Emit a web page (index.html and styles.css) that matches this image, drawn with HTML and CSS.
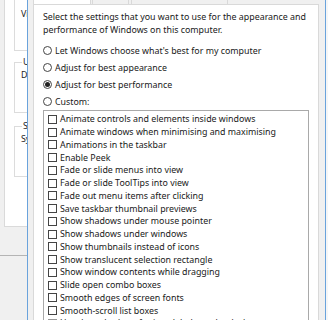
FILE: index.html
```html
<!DOCTYPE html>
<html lang="en">
<head>
    <meta charset="UTF-8">
    <title>Performance Options</title>
    <link rel="stylesheet" href="styles.css">
</head>
<body>
<div class="screen">
    <!-- System Properties window behind, only its right edge shows -->
    <div class="behind-left">
        <div class="sys-panel">
            <div class="grp grp-first">
                <div class="grp-text">Visual</div>
            </div>
            <fieldset class="grp">
                <legend>User</legend>
                <div class="grp-text">Desktop</div>
            </fieldset>
            <fieldset class="grp">
                <legend>Startup</legend>
                <div class="grp-text">System</div>
            </fieldset>
        </div>
        <div class="sys-footer"></div>
    </div>

    <div class="dialog">
        <div class="tabs">
            <div class="tab selected"></div>
            <div class="tab">Advanced</div>
            <div class="tab">Data Execution Prevention</div>
        </div>
        <div class="panel">
            <p class="intro">Select the settings that you want to use for the appearance and<br>performance of Windows on this computer.</p>
            <div class="radios">
                <div class="radio"><span class="dot"></span>Let Windows choose what's best for my computer</div>
                <div class="radio"><span class="dot"></span>Adjust for best appearance</div>
                <div class="radio on"><span class="dot"></span>Adjust for best performance</div>
                <div class="radio"><span class="dot"></span>Custom:</div>
            </div>
            <ul class="fx-list">
                <li><span class="box"></span>Animate controls and elements inside windows</li>
                <li><span class="box"></span>Animate windows when minimising and maximising</li>
                <li><span class="box"></span>Animations in the taskbar</li>
                <li><span class="box"></span>Enable Peek</li>
                <li><span class="box"></span>Fade or slide menus into view</li>
                <li><span class="box"></span>Fade or slide ToolTips into view</li>
                <li><span class="box"></span>Fade out menu items after clicking</li>
                <li><span class="box"></span>Save taskbar thumbnail previews</li>
                <li><span class="box"></span>Show shadows under mouse pointer</li>
                <li><span class="box"></span>Show shadows under windows</li>
                <li><span class="box"></span>Show thumbnails instead of icons</li>
                <li><span class="box"></span>Show translucent selection rectangle</li>
                <li><span class="box"></span>Show window contents while dragging</li>
                <li><span class="box"></span>Slide open combo boxes</li>
                <li><span class="box"></span>Smooth edges of screen fonts</li>
                <li><span class="box"></span>Smooth-scroll list boxes</li>
                <li><span class="box grey"></span>Use drop shadows for icon labels on the desktop</li>
            </ul>
        </div>
    </div>

    <div class="behind-right"></div>
</div>
</body>
</html>
```

FILE: styles.css
```css
html, body {
    margin: 0;
    padding: 0;
}

body {
    width: 328px;
    height: 320px;
    overflow: hidden;
    background: #f0f0f0;
    font-family: "Noto Sans", "DejaVu Sans", sans-serif;
    font-size: 8.85px;
    color: #1a1a1a;
}

.screen {
    display: flex;
    height: 320px;
}

/* window behind */
.behind-left {
    width: 27px;
    flex: none;
    overflow: hidden;
    background: #f0f0f0;
}

.sys-panel {
    margin-left: 4px;
    height: 226px;
    background: #fff;
    border-left: 1px solid #dadada;
    border-bottom: 1px solid #dadada;
    padding-left: 9px;
}

.grp {
    width: 60px;
    margin: 0;
    padding: 0 0 0 6px;
    border: 1px solid #dcdcdc;
    border-right: none;
    box-sizing: border-box;
    white-space: nowrap;
    color: #222;
}

.grp legend {
    padding: 0 1px;
    margin-left: 1px;
    line-height: 10px;
}

.grp-first {
    height: 51px;
    border-top: none;
    padding-top: 6px;
    margin-bottom: 6px;
}

fieldset.grp {
    height: 56px;
    margin-bottom: 8px;
}

.grp-text {
    line-height: 13px;
    margin-top: 2px;
}

.sys-footer {
    height: 28px;
    border-bottom: 1px solid #b4b4b4;
}

/* dialog */
.dialog {
    width: 297px;
    flex: none;
    border-left: 1px solid #6aa3dc;
    border-right: 1px solid #6aa3dc;
    background: #f0f0f0;
}

.tabs {
    display: flex;
    margin-left: 5px;
    height: 4px;
    overflow: hidden;
    align-items: flex-end;
}

.tab {
    height: 16px;
    flex: none;
    box-sizing: border-box;
    padding: 0 4px;
    border: 1px solid #d9d9d9;
    border-bottom: none;
    background: #f0f0f0;
    color: #666;
    line-height: 14px;
    margin-right: 1px;
    overflow: hidden;
    white-space: nowrap;
}

.tab.selected {
    width: 58px;
    background: #fff;
    margin-right: 1px;
}

.tab:nth-child(2) {
    width: 37px;
    margin-right: 2px;
}

.tab:nth-child(3) {
    width: 97px;
}

.panel {
    margin-left: 5px;
    width: 286px;
    box-sizing: border-box;
    height: 330px;
    background: #fff;
    border: 1px solid #d9d9d9;
    padding: 6px 0 0 9px;
}

.intro {
    margin: 0;
    line-height: 13px;
    white-space: nowrap;
}

.radios {
    margin-top: 5px;
}

.radio {
    display: flex;
    align-items: center;
    height: 17px;
    white-space: nowrap;
}

.radio .dot {
    width: 9px;
    height: 9px;
    box-sizing: border-box;
    border: 1px solid #444;
    border-radius: 50%;
    margin-right: 3px;
    flex: none;
    display: flex;
    align-items: center;
    justify-content: center;
}

.radio.on .dot::after {
    content: "";
    width: 5px;
    height: 5px;
    border-radius: 50%;
    background: #222;
}

.fx-list {
    list-style: none;
    margin: 0;
    width: 266px;
    box-sizing: border-box;
    border: 1px solid #a9a9a9;
    padding: 2px 0 0 4px;
}

.fx-list li {
    display: flex;
    align-items: center;
    height: 12.75px;
    white-space: nowrap;
}

.box {
    width: 9px;
    height: 9px;
    box-sizing: border-box;
    border: 1px solid #444;
    margin-right: 3px;
    flex: none;
}

.box.grey {
    background: #cfcfcf;
    border-color: #999;
}

.behind-right {
    flex: 1;
    background: #f6f6f6;
}
```
